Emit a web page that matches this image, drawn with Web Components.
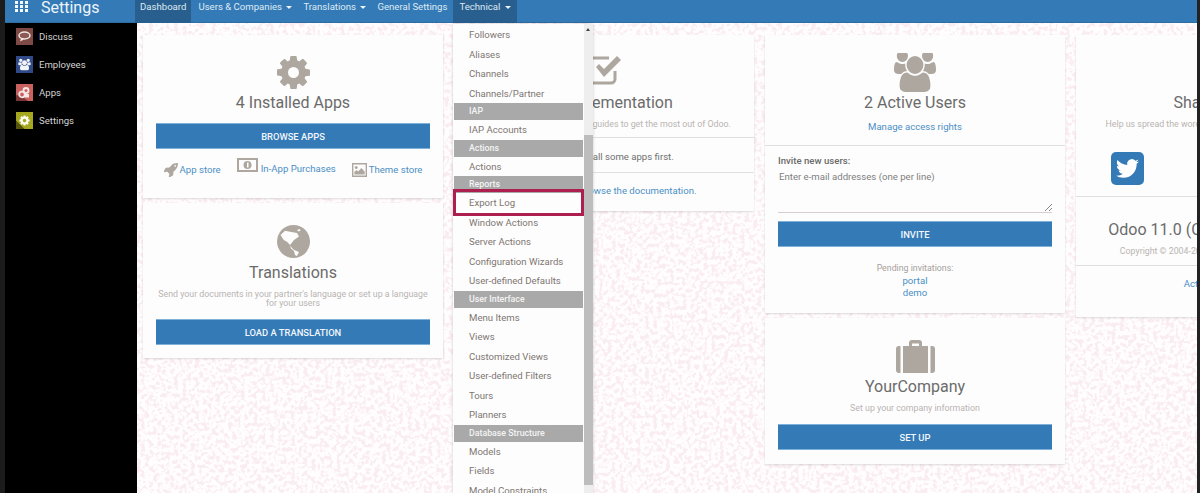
<!DOCTYPE html>
<html lang="en">
<head>
<meta charset="utf-8">
<title>Settings</title>
<style>
  html, body { margin: 0; height: 100%; overflow: hidden; background: #000; font-family: Roboto, "Liberation Sans", sans-serif; }
</style>
</head>
<body>
<od-app></od-app>

<script>
const PATHS = {
  cog: "M1152 896q0-106-75-181t-181-75-181 75-75 181 75 181 181 75 181-75 75-181zm512-109v222q0 12-8 23t-20 13l-185 28q-19 54-39 91 35 50 107 138 10 12 10 25t-9 23q-27 37-99 108t-94 71q-12 0-26-9l-138-108q-44 23-91 38-16 136-29 186-7 28-36 28h-222q-14 0-24.500-8.500t-11.500-21.500l-28-184q-49-16-90-37l-141 107q-10 9-25 9-14 0-25-11-126-114-165-168-7-10-7-23 0-12 8-23 15-21 51-66.500t54-70.500q-27-50-41-99l-183-27q-13-2-21-12.500t-8-23.500v-222q0-12 8-23t19-13l186-28q14-46 39-92-40-57-107-138-10-12-10-24 0-10 9-23 26-36 98.500-107.500t94.500-71.500q13 0 26 10l138 107q44-23 91-38 16-136 29-186 7-28 36-28h222q14 0 24.500 8.500t11.500 21.500l28 184q49 16 90 37l142-107q9-9 24-9 13 0 25 10 129 119 165 170 7 8 7 22 0 12-8 23-15 21-51 66.500t-54 70.500q26 50 41 98l183 28q13 2 21 12.500t8 23.500z",
  users: "M593 896q-162 5-265 128h-134q-82 0-138-40.500t-56-118.500q0-353 124-353 6 0 43.500 21t97.500 42.500 119 21.500q67 0 133-23-5 37-5 66 0 139 81 256zm1071 637q0 120-73 189.500t-194 69.500h-874q-121 0-194-69.500t-73-189.500q0-53 3.500-103.500t14-109 26.500-108.500 43-97.500 62-81 85.500-53.500 111.500-20q10 0 43 21.500t73 48 107 48 135 21.500 135-21.500 107-48 73-48 43-21.500q61 0 111.500 20t85.500 53.500 62 81 43 97.500 26.500 108.500 14 109 3.500 103.500zm-1024-1277q0 106-75 181t-181 75-181-75-75-181 75-181 181-75 181 75 75 181zm704 384q0 159-112.500 271.500t-271.500 112.500-271.500-112.500-112.500-271.500 112.500-271.500 271.500-112.500 271.500 112.500 112.500 271.500zm576 225q0 78-56 118.500t-138 40.500h-134q-103-123-265-128 81-117 81-256 0-29-5-66 66 23 133 23 59 0 119-21.500t97.500-42.500 43.500-21q124 0 124 353zm-128-609q0 106-75 181t-181 75-181-75-75-181 75-181 181-75 181 75 75 181z",
  rocket: "M1504 448q0-40-28-68t-68-28-68 28-28 68 28 68 68 28 68-28 28-68zm224-288q0 249-75.500 430.500t-253.500 360.500q-81 80-195 176l-20 379q-2 16-16 26l-384 224q-7 4-16 4-12 0-23-9l-64-64q-13-14-8-32l85-276-281-281-276 85q-3 1-9 1-14 0-23-9l-64-64q-17-19-5-39l224-384q10-14 26-16l379-20q96-114 176-195 188-187 358-258t431-71q14 0 24 9.500t10 22.500z",
  twitter: "M23.953 4.57a10 10 0 01-2.825.775 4.958 4.958 0 002.163-2.723c-.951.555-2.005.959-3.127 1.184a4.92 4.92 0 00-8.384 4.482C7.69 8.095 4.067 6.13 1.64 3.162a4.822 4.822 0 00-.666 2.475c0 1.71.87 3.213 2.188 4.096a4.904 4.904 0 01-2.228-.616v.06a4.923 4.923 0 003.946 4.827 4.996 4.996 0 01-2.212.085 4.936 4.936 0 004.604 3.417 9.867 9.867 0 01-6.102 2.105c-.39 0-.779-.023-1.17-.067a13.995 13.995 0 007.557 2.209c9.053 0 13.998-7.496 13.998-13.985 0-.21 0-.42-.015-.63A9.935 9.935 0 0024 4.59z"
};

const ICONS = {
  cog: () => `<svg width="33" height="33" viewBox="128 128 1536 1536"><path d="${PATHS.cog}"/></svg>`,
  users: () => `<svg width="42" height="39" viewBox="0 128 1920 1664" preserveAspectRatio="none"><path d="${PATHS.users}"/></svg>`,
  rocket: () => `<svg width="14" height="14" viewBox="128 128 1600 1600"><path d="${PATHS.rocket}"/></svg>`,
  globe: () => `<svg width="33" height="33" viewBox="0 0 33 33"><circle cx="16.500" cy="16.500" r="16.500"/><path fill="#fdfdfd" d="M3.500 10L8 5.700l5 1 7 1.300 2 3.500L17 15l-2 2.500-2 2.500-3-3.300-3.300-1.700z"/><path fill="#fdfdfd" d="M13 20.500l2 2.500 2 2 5 2-2 4-2-1-1-4-3-2.500zM20 5l3-1 .5 1.500-2 1z"/></svg>`,
  check: () => `<svg width="36" height="31" viewBox="0 0 36 31"><path fill="none" stroke="#aea79f" stroke-width="3" d="M29 17v8a4 4 0 0 1-4 4H6a4 4 0 0 1-4-4V8a4 4 0 0 1 4-4h17"/><path d="M10 13l3-3 5 5L31 2l4 4-17 17z"/></svg>`,
  money: () => `<svg width="21" height="14" viewBox="0 0 21 14"><path fill-rule="evenodd" d="M0 0h21v14H0zM2 2v10h17V2z"/><circle cx="10.500" cy="7" r="4"/><rect x="10" y="4.500" width="1.500" height="5" fill="#fff"/></svg>`,
  picture: () => `<svg width="15" height="14" viewBox="0 0 16 14" preserveAspectRatio="none"><path fill-rule="evenodd" d="M0 0h16v14H0zM1.500 1.500v11h13v-11z"/><circle cx="4.500" cy="4.500" r="1.500"/><path d="M2.500 11.500V9L5 7l1.500 1.500L10 5l3.500 3.500v3z"/></svg>`,
  briefcase: () => `<svg width="39" height="33" viewBox="0 0 39 33"><path fill-rule="evenodd" d="M13 6V3a3 3 0 0 1 3-3h7a3 3 0 0 1 3 3v3h-3V3.500h-7V6z"/><path d="M7 6h25v27H7zM4.500 6v27H3a3 3 0 0 1-3-3V9a3 3 0 0 1 3-3zM34.500 6H36a3 3 0 0 1 3 3v21a3 3 0 0 1-3 3h-1.500z"/></svg>`
};

class OdApp extends HTMLElement {
  constructor() {
    super();
    this.attachShadow({ mode: "open" });
    this.shadowRoot.innerHTML = `
      <style>
        :host { display: flex; height: 493px; width: 1200px; overflow: hidden; }
        .edge-l { width: 5px; background: #1c1c1c; flex: none; }
        .edge-r { width: 3px; background: #222; flex: none; }
        .main { flex: 1; min-width: 0; display: flex; flex-direction: column; position: relative; }
        .body { flex: 1; min-height: 0; display: flex; }
      </style>
      <div class="edge-l"></div>
      <div class="main">
        <od-navbar></od-navbar>
        <div class="body">
          <od-sidebar></od-sidebar>
          <od-dashboard></od-dashboard>
        </div>
        <od-tech-menu></od-tech-menu>
      </div>
      <div class="edge-r"></div>
    `;
  }
}

class OdNavbar extends HTMLElement {
  constructor() {
    super();
    this.attachShadow({ mode: "open" });
    const caret = `<i class="caret"></i>`;
    this.shadowRoot.innerHTML = `
      <style>
        :host { display: flex; flex: none; height: 23px; background: #337ab7; color: #fff; font-size: 9.600px; line-height: 13px; border-bottom: 1px solid #2e6da4; box-sizing: border-box; }
        .apps { width: 13px; height: 11px; margin: 1px 13px 0 10px; display: grid; grid-template-columns: repeat(3, 3px); grid-auto-rows: 3px; gap: 1px 2px; }
        .apps b { background: #f4f8fb; }
        .brand { font-size: 16px; line-height: 14px; width: 94px; color: #eef4f9; padding-top: 1px; }
        a { padding: 0 6px; color: #dfeaf3; white-space: nowrap; }
        a.tight { padding-right: 5px; }
        a.active { background: #285f8f; height: 23px; }
        a.first { padding: 0 5px; margin-right: 1px; }
        .caret { display: inline-block; width: 0; height: 0; margin-left: 2px; vertical-align: 1px; border-top: 3px solid #eef4f9; border-left: 3px solid transparent; border-right: 3px solid transparent; }
      </style>
      <div class="apps">${"<b></b>".repeat(9)}</div>
      <div class="brand">Settings</div>
      <a class="active first">Dashboard</a>
      <a class="tight">Users &amp; Companies ${caret}</a>
      <a class="tight">Translations ${caret}</a>
      <a>General Settings</a>
      <a class="active">Technical ${caret}</a>
    `;
  }
}

class OdSidebar extends HTMLElement {
  constructor() {
    super();
    this.attachShadow({ mode: "open" });
    const apps = [
      ["Discuss", "#7d4a46", `<svg viewBox="0 0 17 17" width="17" height="17"><ellipse cx="8.500" cy="7.500" rx="5.500" ry="3.500" fill="#8c5a56" stroke="#f2e6e2" stroke-width="1.500"/><path d="M5 10.500l-1 3 4-2z" fill="#f2e6e2"/></svg>`],
      ["Employees", "#2f4a86", `<svg viewBox="0 0 1920 1792" width="17" height="17"><g transform="translate(260 240) scale(.73)"><path fill="#f2f4f8" d="${PATHS.users}"/></g></svg>`],
      ["Apps", "#c9625f", `<svg viewBox="0 0 17 17" width="17" height="17"><path d="M0 17v-6l5 1 7 5z" fill="#7a3634"/><circle cx="6" cy="10.500" r="2.800" fill="none" stroke="#f5e8e8" stroke-width="1.800"/><circle cx="10" cy="6.500" r="2.500" fill="none" stroke="#f5e8e8" stroke-width="1.800"/><rect x="9" y="10" width="4" height="3.500" fill="#f5e8e8"/></svg>`],
      ["Settings", "#a5a81e", `<svg viewBox="0 0 1792 1792" width="17" height="17"><path d="M0 1792V900l500 500 400 392z" fill="#55560c"/><g transform="translate(270 270) scale(.7)"><path fill="#fbfbf0" d="${PATHS.cog}"/></g></svg>`]
    ];
    this.shadowRoot.innerHTML = `
      <style>
        :host { display: block; flex: none; width: 132px; background: #000; padding-top: 5px; box-sizing: border-box; }
        .item { display: flex; align-items: center; height: 17px; margin-bottom: 11px; padding-left: 11px; gap: 6px; color: #d3d3d3; font-size: 9.600px; }
        .ico { width: 17px; height: 17px; flex: none; }
        .ico svg { display: block; }
      </style>
      ${apps.map(([name, bg, svg]) => `<div class="item"><span class="ico" style="background:${bg}">${svg}</span>${name}</div>`).join("")}
    `;
  }
}

class OdDashboard extends HTMLElement {
  constructor() {
    super();
    this.attachShadow({ mode: "open" });
    this.shadowRoot.innerHTML = `
      <style>
        :host { display: block; flex: 1; min-width: 0; position: relative; overflow: hidden; background: #fffdfe; }
        .texture { position: absolute; inset: 0; width: 100%; height: 100%; }
        .cols { position: relative; display: flex; gap: 11px; padding: 12px 0 0 6px; width: 1300px; align-items: flex-start; }
        .col { width: 300px; flex: none; display: flex; flex-direction: column; gap: 5px; }
      </style>
      <svg class="texture" aria-hidden="true">
        <filter id="bump" x="0" y="0" width="100%" height="100%" color-interpolation-filters="sRGB">
          <feTurbulence type="fractalNoise" baseFrequency="0.24" numOctaves="2" seed="4"/>
          <feColorMatrix values="0 0 0 0 0.98  0 0 0 0 0.93  0 0 0 0 0.95  7 0 0 0 -3.300"/>
        </filter>
        <rect width="100%" height="100%" filter="url(#bump)"/>
      </svg>
      <div class="cols">
        <div class="col">
          <od-card>
            <od-section pad="21px 13px 21px">
              <od-hero icon="cog" title="4 Installed Apps" gap="4"></od-hero>
              <od-button top="10">Browse Apps</od-button>
              <od-store-links></od-store-links>
            </od-section>
          </od-card>
          <od-card>
            <od-section pad="22px 13px 13px">
              <od-hero icon="globe" title="Translations" gap="5"
                sub="Send your documents in your partner's language or set up a language for your users"></od-hero>
              <od-button top="11">Load a Translation</od-button>
            </od-section>
          </od-card>
        </div>
        <div class="col">
          <od-card>
            <od-section pad="19px 13px 8px">
              <od-hero icon="check" title="My Implementation" gap="8" sub="Follow these implementation guides to get the most out of Odoo."></od-hero>
            </od-section>
            <od-section line pad="13px 13px 9px"><od-note>You must install some apps first.</od-note></od-section>
            <od-section line pad="12px 13px 14px"><od-note link>You can always browse the documentation.</od-note></od-section>
          </od-card>
        </div>
        <div class="col">
          <od-card>
            <od-section pad="18px 13px 12px">
              <od-hero icon="users" title="2 Active Users" gap="1"></od-hero>
              <od-note link top="8">Manage access rights</od-note>
            </od-section>
            <od-section line pad="9px 13px 14px">
              <od-invite></od-invite>
              <od-button top="8">Invite</od-button>
              <od-note muted top="15">Pending invitations:</od-note>
              <od-note link top="1">portal</od-note>
              <od-note link top="0">demo</od-note>
            </od-section>
          </od-card>
          <od-card>
            <od-section pad="22px 13px 14px">
              <od-hero icon="briefcase" title="YourCompany" gap="4" sub="Set up your company information"></od-hero>
              <od-button top="11">Set Up</od-button>
            </od-section>
          </od-card>
        </div>
        <div class="col">
          <od-card>
            <od-section pad="58px 13px 11px">
              <od-hero title="Share the Love" sub="Help us spread the word: Share Odoo's awesomeness with all!"></od-hero>
              <od-social></od-social>
            </od-section>
            <od-section line pad="23px 13px 9px">
              <od-hero title="Odoo 11.0 (Community Edition)" shift="-12" sub="Copyright © 2004-2018 Odoo S.A. GNU LGPL Licensed"></od-hero>
            </od-section>
            <od-section line pad="12px 13px 27px 50px"><od-note link>Activate the developer mode</od-note></od-section>
          </od-card>
        </div>
      </div>
    `;
  }
}

class OdCard extends HTMLElement {
  constructor() {
    super();
    this.attachShadow({ mode: "open" });
    this.shadowRoot.innerHTML = `
      <style>
        :host { display: block; background: #fdfdfd; box-shadow: 0 1px 2px rgba(0, 0, 0, 0.14); }
      </style>
      <slot></slot>
    `;
  }
}

class OdSection extends HTMLElement {
  constructor() {
    super();
    this.attachShadow({ mode: "open" });
    this.shadowRoot.innerHTML = `
      <style>
        :host { display: block; }
        :host([line]) { border-top: 1px solid #e2dfe0; }
      </style>
      <slot></slot>
    `;
  }
  connectedCallback() {
    this.style.padding = this.getAttribute("pad") || "13px";
  }
}

class OdHero extends HTMLElement {
  constructor() {
    super();
    this.attachShadow({ mode: "open" });
  }
  connectedCallback() {
    const icon = this.getAttribute("icon");
    const gap = this.getAttribute("gap") || 0;
    const sub = this.getAttribute("sub");
    const shift = this.getAttribute("shift") || 0;
    const art = icon ? ICONS[icon]() : "";
    this.shadowRoot.innerHTML = `
      <style>
        :host { display: block; text-align: center; }
        .art { display: flex; justify-content: center; fill: #aea79f; margin-bottom: ${gap}px; }
        .art svg { display: block; }
        h2 { margin: 0 0 0 ${shift}px; font-size: 16px; line-height: 20px; font-weight: 400; color: #6b6b6b; white-space: nowrap; }
        p { margin: 7px 0 0; font-size: 8.800px; line-height: 9px; color: #b9b4b1; }
      </style>
      ${art ? `<div class="art">${art}</div>` : ""}
      <h2>${this.getAttribute("title")}</h2>
      ${sub ? `<p>${sub}</p>` : ""}
    `;
  }
}

class OdButton extends HTMLElement {
  constructor() {
    super();
    this.attachShadow({ mode: "open" });
    this.shadowRoot.innerHTML = `
      <style>
        :host { display: flex; align-items: center; justify-content: center; height: 26px; box-sizing: border-box; background: #337ab7; border: 1px solid #7fb0da; border-width: 1px 0; color: #f2f6fa; font-size: 9.400px; font-weight: 500; text-transform: uppercase; }
      </style>
      <slot></slot>
    `;
  }
  connectedCallback() {
    this.style.marginTop = (this.getAttribute("top") || 0) + "px";
  }
}

class OdNote extends HTMLElement {
  constructor() {
    super();
    this.attachShadow({ mode: "open" });
    this.shadowRoot.innerHTML = `
      <style>
        :host { display: block; text-align: center; font-size: 9.600px; line-height: 12px; color: #6f6f6f; white-space: nowrap; }
        :host([link]) { color: #4b8fc6; }
        :host([muted]) { color: #a5a09c; font-size: 8.800px; }
      </style>
      <slot></slot>
    `;
  }
  connectedCallback() {
    if (this.hasAttribute("top")) this.style.marginTop = this.getAttribute("top") + "px";
  }
}

class OdStoreLinks extends HTMLElement {
  constructor() {
    super();
    this.attachShadow({ mode: "open" });
    this.shadowRoot.innerHTML = `
      <style>
        :host { display: flex; justify-content: center; gap: 16px; margin-top: 9px; height: 19px; fill: #aea79f; color: #4b8fc6; font-size: 9.600px; line-height: 14px; }
        span { display: inline-flex; align-items: center; gap: 2px; white-space: nowrap; margin-top: 5px; height: 14px; }
        span.raised { gap: 3px; margin-top: 0; align-items: flex-start; }
        span.raised b { font-weight: 400; margin-top: 4px; }
        svg { display: block; flex: none; }
      </style>
      <span>${ICONS.rocket()}App store</span>
      <span class="raised">${ICONS.money()}<b>In-App Purchases</b></span>
      <span>${ICONS.picture()}Theme store</span>
    `;
  }
}

class OdInvite extends HTMLElement {
  constructor() {
    super();
    this.attachShadow({ mode: "open" });
    this.shadowRoot.innerHTML = `
      <style>
        :host { display: block; font-size: 9.600px; line-height: 12px; }
        label { display: block; font-weight: 500; color: #6a6a6a; }
        .area { height: 41px; margin-top: 3px; padding: 1px 0 0 1px; border-bottom: 1px solid #d9ccd2; color: #7f7f7f; position: relative; }
        .grip { position: absolute; right: 0; bottom: 1px; }
      </style>
      <label>Invite new users:</label>
      <div class="area">Enter e-mail addresses (one per line)
        <svg class="grip" width="7" height="7" viewBox="0 0 7 7"><path d="M0 7L7 0M4 7L7 4" stroke="#888" fill="none"/></svg>
      </div>
    `;
  }
}

class OdSocial extends HTMLElement {
  constructor() {
    super();
    this.attachShadow({ mode: "open" });
    this.shadowRoot.innerHTML = `
      <style>
        :host { display: block; margin: 23px 0 0 22px; }
        .tile { width: 33px; height: 33px; border-radius: 5px; background: #337ab7; display: flex; align-items: center; justify-content: center; }
        svg { display: block; fill: #fff; }
      </style>
      <div class="tile"><svg width="23" height="23" viewBox="0 0 24 24"><path d="${PATHS.twitter}"/></svg></div>
    `;
  }
}

class OdTechMenu extends HTMLElement {
  constructor() {
    super();
    this.attachShadow({ mode: "open" });
    const rows = [
      "Followers", "Aliases", "Channels", "Channels/Partner", "#IAP", "IAP Accounts",
      "#Actions", "Actions", "#Reports", "Export Log", "Window Actions", "Server Actions",
      "Configuration Wizards", "User-defined Defaults", "#User Interface", "Menu Items", "Views",
      "Customized Views", "User-defined Filters", "Tours", "Planners", "#Database Structure",
      "Models", "Fields", "Model Constraints"
    ];
    this.shadowRoot.innerHTML = `
      <style>
        :host { position: absolute; left: 448px; top: 24px; width: 140px; height: 469px; overflow: hidden; display: flex; background: #fdfdfd; box-shadow: 0 0 3px rgba(0, 0, 0, 0.2); font-size: 9.600px; color: #7d7672; }
        .list { flex: 1; min-width: 0; padding: 1.200px 1px 0 0; }
        .row { height: 19.500px; line-height: 19.500px; padding-left: 16px; white-space: nowrap; }
        .head { height: 17px; line-height: 17px; margin: 0 0 0 1px; padding-left: 15px; background: #a9a9a9; color: #f4f4f4; font-size: 8.800px; font-weight: 500; }
        .bar { width: 9px; flex: none; background: #eeeeee; position: relative; }
        .up { position: absolute; left: 2px; top: 4px; border-bottom: 3px solid #444; border-left: 2.500px solid transparent; border-right: 2.500px solid transparent; }
        .thumb { position: absolute; left: 0; right: 0; top: 111px; height: 350px; background: #bdbdbd; }
        .mark { position: absolute; left: 0; top: 165px; width: 131px; height: 27px; box-sizing: border-box; border: 3px solid #ad1f4f; }
      </style>
      <div class="list">
        ${rows.map(r => r[0] === "#"
          ? `<div class="head">${r.slice(1)}</div>`
          : `<div class="row">${r}</div>`).join("")}
      </div>
      <div class="bar"><i class="up"></i><div class="thumb"></div></div>
      <div class="mark"></div>
    `;
  }
}

customElements.define("od-app", OdApp);
customElements.define("od-navbar", OdNavbar);
customElements.define("od-sidebar", OdSidebar);
customElements.define("od-dashboard", OdDashboard);
customElements.define("od-card", OdCard);
customElements.define("od-section", OdSection);
customElements.define("od-hero", OdHero);
customElements.define("od-button", OdButton);
customElements.define("od-note", OdNote);
customElements.define("od-store-links", OdStoreLinks);
customElements.define("od-invite", OdInvite);
customElements.define("od-social", OdSocial);
customElements.define("od-tech-menu", OdTechMenu);
</script>
</body>
</html>
